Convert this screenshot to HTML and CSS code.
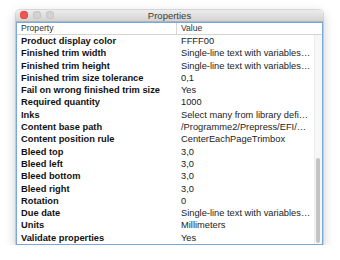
FILE: index.html
```html
<!DOCTYPE html>
<html lang="en">
<head>
<meta charset="UTF-8">
<title>Properties</title>
<link rel="stylesheet" href="styles.css">
</head>
<body>

<div class="window">
    <div class="titlebar">
        <div class="lights">
            <span class="light red"></span>
            <span class="light"></span>
            <span class="light"></span>
        </div>
        <div class="title">Properties</div>
    </div>

    <div class="table">
        <div class="head">
            <div class="col-name">Property</div>
            <div class="col-value">Value</div>
        </div>
        <div class="rows">
            <div class="row"><div class="col-name">Product display color</div><div class="col-value">FFFF00</div></div>
            <div class="row"><div class="col-name">Finished trim width</div><div class="col-value">Single-line text with variables…</div></div>
            <div class="row"><div class="col-name">Finished trim height</div><div class="col-value">Single-line text with variables…</div></div>
            <div class="row"><div class="col-name">Finished trim size tolerance</div><div class="col-value">0,1</div></div>
            <div class="row"><div class="col-name">Fail on wrong finished trim size</div><div class="col-value">Yes</div></div>
            <div class="row"><div class="col-name">Required quantity</div><div class="col-value">1000</div></div>
            <div class="row"><div class="col-name">Inks</div><div class="col-value">Select many from library defi…</div></div>
            <div class="row"><div class="col-name">Content base path</div><div class="col-value">/Programme2/Prepress/EFI/…</div></div>
            <div class="row"><div class="col-name">Content position rule</div><div class="col-value">CenterEachPageTrimbox</div></div>
            <div class="row"><div class="col-name">Bleed top</div><div class="col-value">3,0</div></div>
            <div class="row"><div class="col-name">Bleed left</div><div class="col-value">3,0</div></div>
            <div class="row"><div class="col-name">Bleed bottom</div><div class="col-value">3,0</div></div>
            <div class="row"><div class="col-name">Bleed right</div><div class="col-value">3,0</div></div>
            <div class="row"><div class="col-name">Rotation</div><div class="col-value">0</div></div>
            <div class="row"><div class="col-name">Due date</div><div class="col-value">Single-line text with variables…</div></div>
            <div class="row"><div class="col-name">Units</div><div class="col-value">Millimeters</div></div>
            <div class="row"><div class="col-name">Validate properties</div><div class="col-value">Yes</div></div>
        </div>

        <!-- overlay scroller -->
        <div class="scroller">
            <div class="thumb"></div>
        </div>
    </div>
</div>

</body>
</html>
```

FILE: styles.css
```css
body {
    margin: 0;
    background: #ffffff;
    font-family: 'Liberation Sans', Arial, sans-serif;
    color: #1a1a1a;
}

.window {
    margin: 10px 0 0 16px;
    width: 307px;
    background: #ffffff;
    box-shadow: 0 4px 12px rgba(0, 0, 0, 0.22), 0 0 0 1px rgba(0, 0, 0, 0.12);
    border-radius: 4px 4px 0 0;
}

/* --- title bar --- */
.titlebar {
    position: relative;
    height: 11px;
    background: linear-gradient(#ececec, #d3d3d3);
    border-bottom: 1px solid #b3b3b3;
    border-radius: 4px 4px 0 0;
    display: flex;
    align-items: center;
    justify-content: center;
}

.lights {
    position: absolute;
    left: 4px;
    top: 1px;
    display: flex;
    gap: 5px;
}

.light {
    width: 8px;
    height: 8px;
    border-radius: 50%;
    background: #d2d2d2;
    box-shadow: inset 0 0 0 0.5px #bdbdbd;
}

.light.red {
    background: #f25453;
    box-shadow: inset 0 0 0 0.5px #d8403f;
}

.title {
    font-size: 9.5px;
    color: #3a3a3a;
    line-height: 11px;
}

/* --- table --- */
.table {
    position: relative;
    border: 1px solid #7aa7e0;
    font-size: 9.3px;
}

.head {
    display: flex;
    height: 11px;
    line-height: 11px;
    border-bottom: 1px solid #d4d4d4;
    color: #333333;
    font-size: 8.6px;
}

.head .col-value {
    border-left: 1px solid #d8d8d8;
}

.col-name {
    width: 155px;
    padding-left: 4px;
    white-space: nowrap;
    overflow: hidden;
}

.col-value {
    flex: 1;
    padding-left: 4px;
    white-space: nowrap;
    overflow: hidden;
}

.row {
    display: flex;
    height: 12.3px;
    line-height: 12.3px;
}

.row .col-name {
    font-weight: bold;
    color: #111111;
}

.row .col-value {
    padding-left: 5px;
    color: #222222;
}

.scroller {
    position: absolute;
    right: 0;
    top: 12px;
    bottom: 0;
    width: 7px;
    background: #f7f7f7;
    border-left: 1px solid #ececec;
}

.thumb {
    position: absolute;
    left: 1px;
    right: 2px;
    top: 123px;
    bottom: 1px;
    border-radius: 2px;
    background: #c3c3c3;
}
```
